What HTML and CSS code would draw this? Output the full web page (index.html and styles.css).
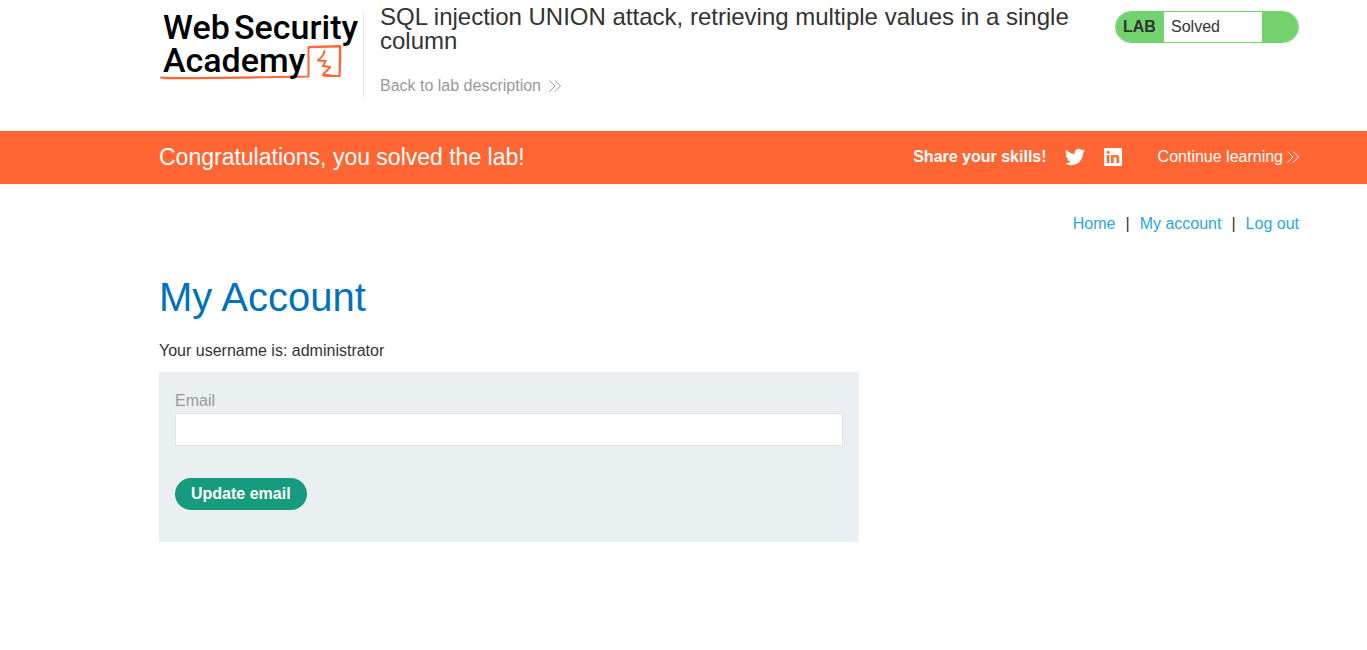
FILE: index.html
```html
<!DOCTYPE html>
<html lang="en">
<head>
<meta charset="utf-8">
<meta name="viewport" content="width=device-width, initial-scale=1">
<title>SQL injection UNION attack, retrieving multiple values in a single column</title>
<link rel="stylesheet" href="styles.css">
</head>
<body>
<header class="lab-header container">
  <a class="logo" href="#" aria-label="Web Security Academy">
    <svg width="204" height="86" viewBox="0 0 204 86">
      <g fill="none" stroke="#ff6633" stroke-linejoin="round" stroke-linecap="round">
        <path stroke-width="2" d="M2 66.500C40 68 100 66 149.500 65.500L149.500 36L181 35L180.500 65Q168 65 164 64.500"/>
        <path stroke-width="1.500" d="M5 67.500C30 68 70 67 100 66.500M151 36.500Q166 36 181.500 35.500L181.500 50L180.500 65.500"/>
        <path stroke-width="2" stroke-linejoin="miter" stroke-miterlimit="2" d="M165.500 40Q165 45 158.500 49.500L166.500 50L164 55L171.500 56L164 63.500L172 64.500"/>
      </g>
      <g class="logo-text">
        <text x="4" y="28">Web</text>
        <text x="75" y="28">Security</text>
        <text x="4" y="61">Academy</text>
      </g>
    </svg>
  </a>
  <div class="lab-title">
    <h2>SQL injection UNION attack, retrieving multiple values in a single column</h2>
    <a class="back-link" href="#">Back to lab description
      <svg width="12" height="12" viewBox="0 0 12 12" fill="none" stroke="currentColor"><path d="M.5.5 6 6 .5 11.500M6 .5 11.500 6 6 11.500"/></svg>
    </a>
  </div>
  <div class="lab-status"><span class="lab-label">LAB</span><p>Solved</p><span class="lab-end"></span></div>
</header>
<section class="banner">
  <div class="banner-inner container">
    <h4>Congratulations, you solved the lab!</h4>
    <span class="share">Share your skills!</span>
    <a class="social" href="#" aria-label="Twitter">
      <svg width="20" height="20" viewBox="0 0 24 24" fill="#fff"><path d="M23.950 4.570a10 10 0 0 1-2.820.770 4.960 4.960 0 0 0 2.160-2.720c-.950.550-2 .950-3.130 1.180a4.920 4.920 0 0 0-8.380 4.480C7.690 8.090 4.070 6.130 1.640 3.160a4.920 4.920 0 0 0 1.520 6.570 4.900 4.900 0 0 1-2.230-.610v.060a4.920 4.920 0 0 0 3.950 4.830 5 5 0 0 1-2.210.080 4.940 4.940 0 0 0 4.600 3.420A9.870 9.870 0 0 1 0 19.540a14 14 0 0 0 7.550 2.210c9.050 0 14-7.500 14-13.980 0-.210 0-.420-.020-.630A9.940 9.940 0 0 0 24 4.590z"/></svg>
    </a>
    <a class="social" href="#" aria-label="LinkedIn">
      <svg width="20" height="20" viewBox="0 0 20 20"><rect x="1" y="1" width="18" height="18" rx="1" fill="#fff"/><g fill="#ff6633"><path d="M3.800 8h2.600v8H3.800zM8 8h2.500v1.200C11 8.300 12 7.800 13.100 7.800c2.300 0 3.100 1.500 3.100 3.700V16h-2.600v-4c0-1.100-.2-2-1.400-2s-1.600.9-1.600 2v4H8z"/><circle cx="5.100" cy="5.200" r="1.500"/></g></svg>
    </a>
    <a class="continue" href="#">Continue learning
      <svg width="12" height="12" viewBox="0 0 12 12" fill="none" stroke="currentColor"><path d="M.5.5 6 6 .5 11.500M6 .5 11.500 6 6 11.500"/></svg>
    </a>
  </div>
</section>
<main class="container">
  <nav class="top-links">
    <a href="#">Home</a><span>|</span><a href="#">My account</a><span>|</span><a href="#">Log out</a>
  </nav>
  <h1>My Account</h1>
  <p class="username">Your username is: administrator</p>
  <form class="email-form">
    <label for="email">Email</label>
    <input id="email" type="email" name="email">
    <button type="submit">Update email</button>
  </form>
</main>
</body>
</html>
```
FILE: styles.css
```css
* { box-sizing: border-box; }
body {
  margin: 0;
  background: #fff;
  color: #333332;
  font: 16px/24px "Liberation Sans", Arial, sans-serif;
}
h1, h2, h4, p { margin: 0; font-weight: 400; }
a { text-decoration: none; }
svg { display: block; }
.container { padding-left: 159px; padding-right: 68px; }

.lab-header { display: flex; align-items: flex-start; padding-bottom: 33px; }
.logo { margin-top: 11px; border-right: 1px solid #e5e5e5; }
.logo-text { fill: #000; font: 500 34px Roboto, sans-serif; }
.lab-title { flex: 1; margin: 5px 32px 0 16px; }
.lab-title h2 { font-size: 24px; line-height: 24px; }
.back-link {
  display: inline-flex;
  align-items: center;
  gap: 8px;
  margin-top: 21px;
  color: #999;
}
.lab-status {
  display: flex;
  width: 184px;
  height: 32px;
  margin-top: 11px;
  border: 1px solid #72d26e;
  border-radius: 16px;
  overflow: hidden;
  line-height: 30px;
}
.lab-label { width: 48px; padding-left: 7px; background: #72d26e; font-weight: 700; }
.lab-status p { flex: 1; padding-left: 7px; }
.lab-end { width: 36px; background: #72d26e; }

.banner { background: #ff6633; color: #fff; }
.banner-inner { display: flex; align-items: center; height: 53px; padding-bottom: 1px; }
.banner h4 { flex: 1; font-size: 23px; }
.share { font-weight: 700; }
.social { margin-left: 18px; }
.continue { display: flex; align-items: center; gap: 4px; margin-left: 35px; color: #fff; }

.top-links { display: flex; justify-content: flex-end; gap: 10px; padding-top: 28px; }
.top-links a { color: #29a7df; }
h1 { margin-top: 35px; color: #0071bc; font-size: 40px; line-height: 52px; }
.username { margin-top: 16px; }
.email-form {
  display: flex;
  flex-direction: column;
  align-items: flex-start;
  max-width: 700px;
  margin-top: 9px;
  padding: 17px 16px 32px;
  background: #eaeff2;
}
.email-form label { color: #999; }
.email-form input {
  width: 100%;
  height: 33px;
  padding: 0 8px;
  border: 1px solid #e3e5e5;
  background: #fff;
  font: inherit;
}
.email-form button {
  height: 32px;
  margin-top: 32px;
  padding: 0 16px;
  border: 0;
  border-radius: 16px;
  background: #179b7f;
  color: #fff;
  font: inherit;
  font-weight: 700;
}
```
